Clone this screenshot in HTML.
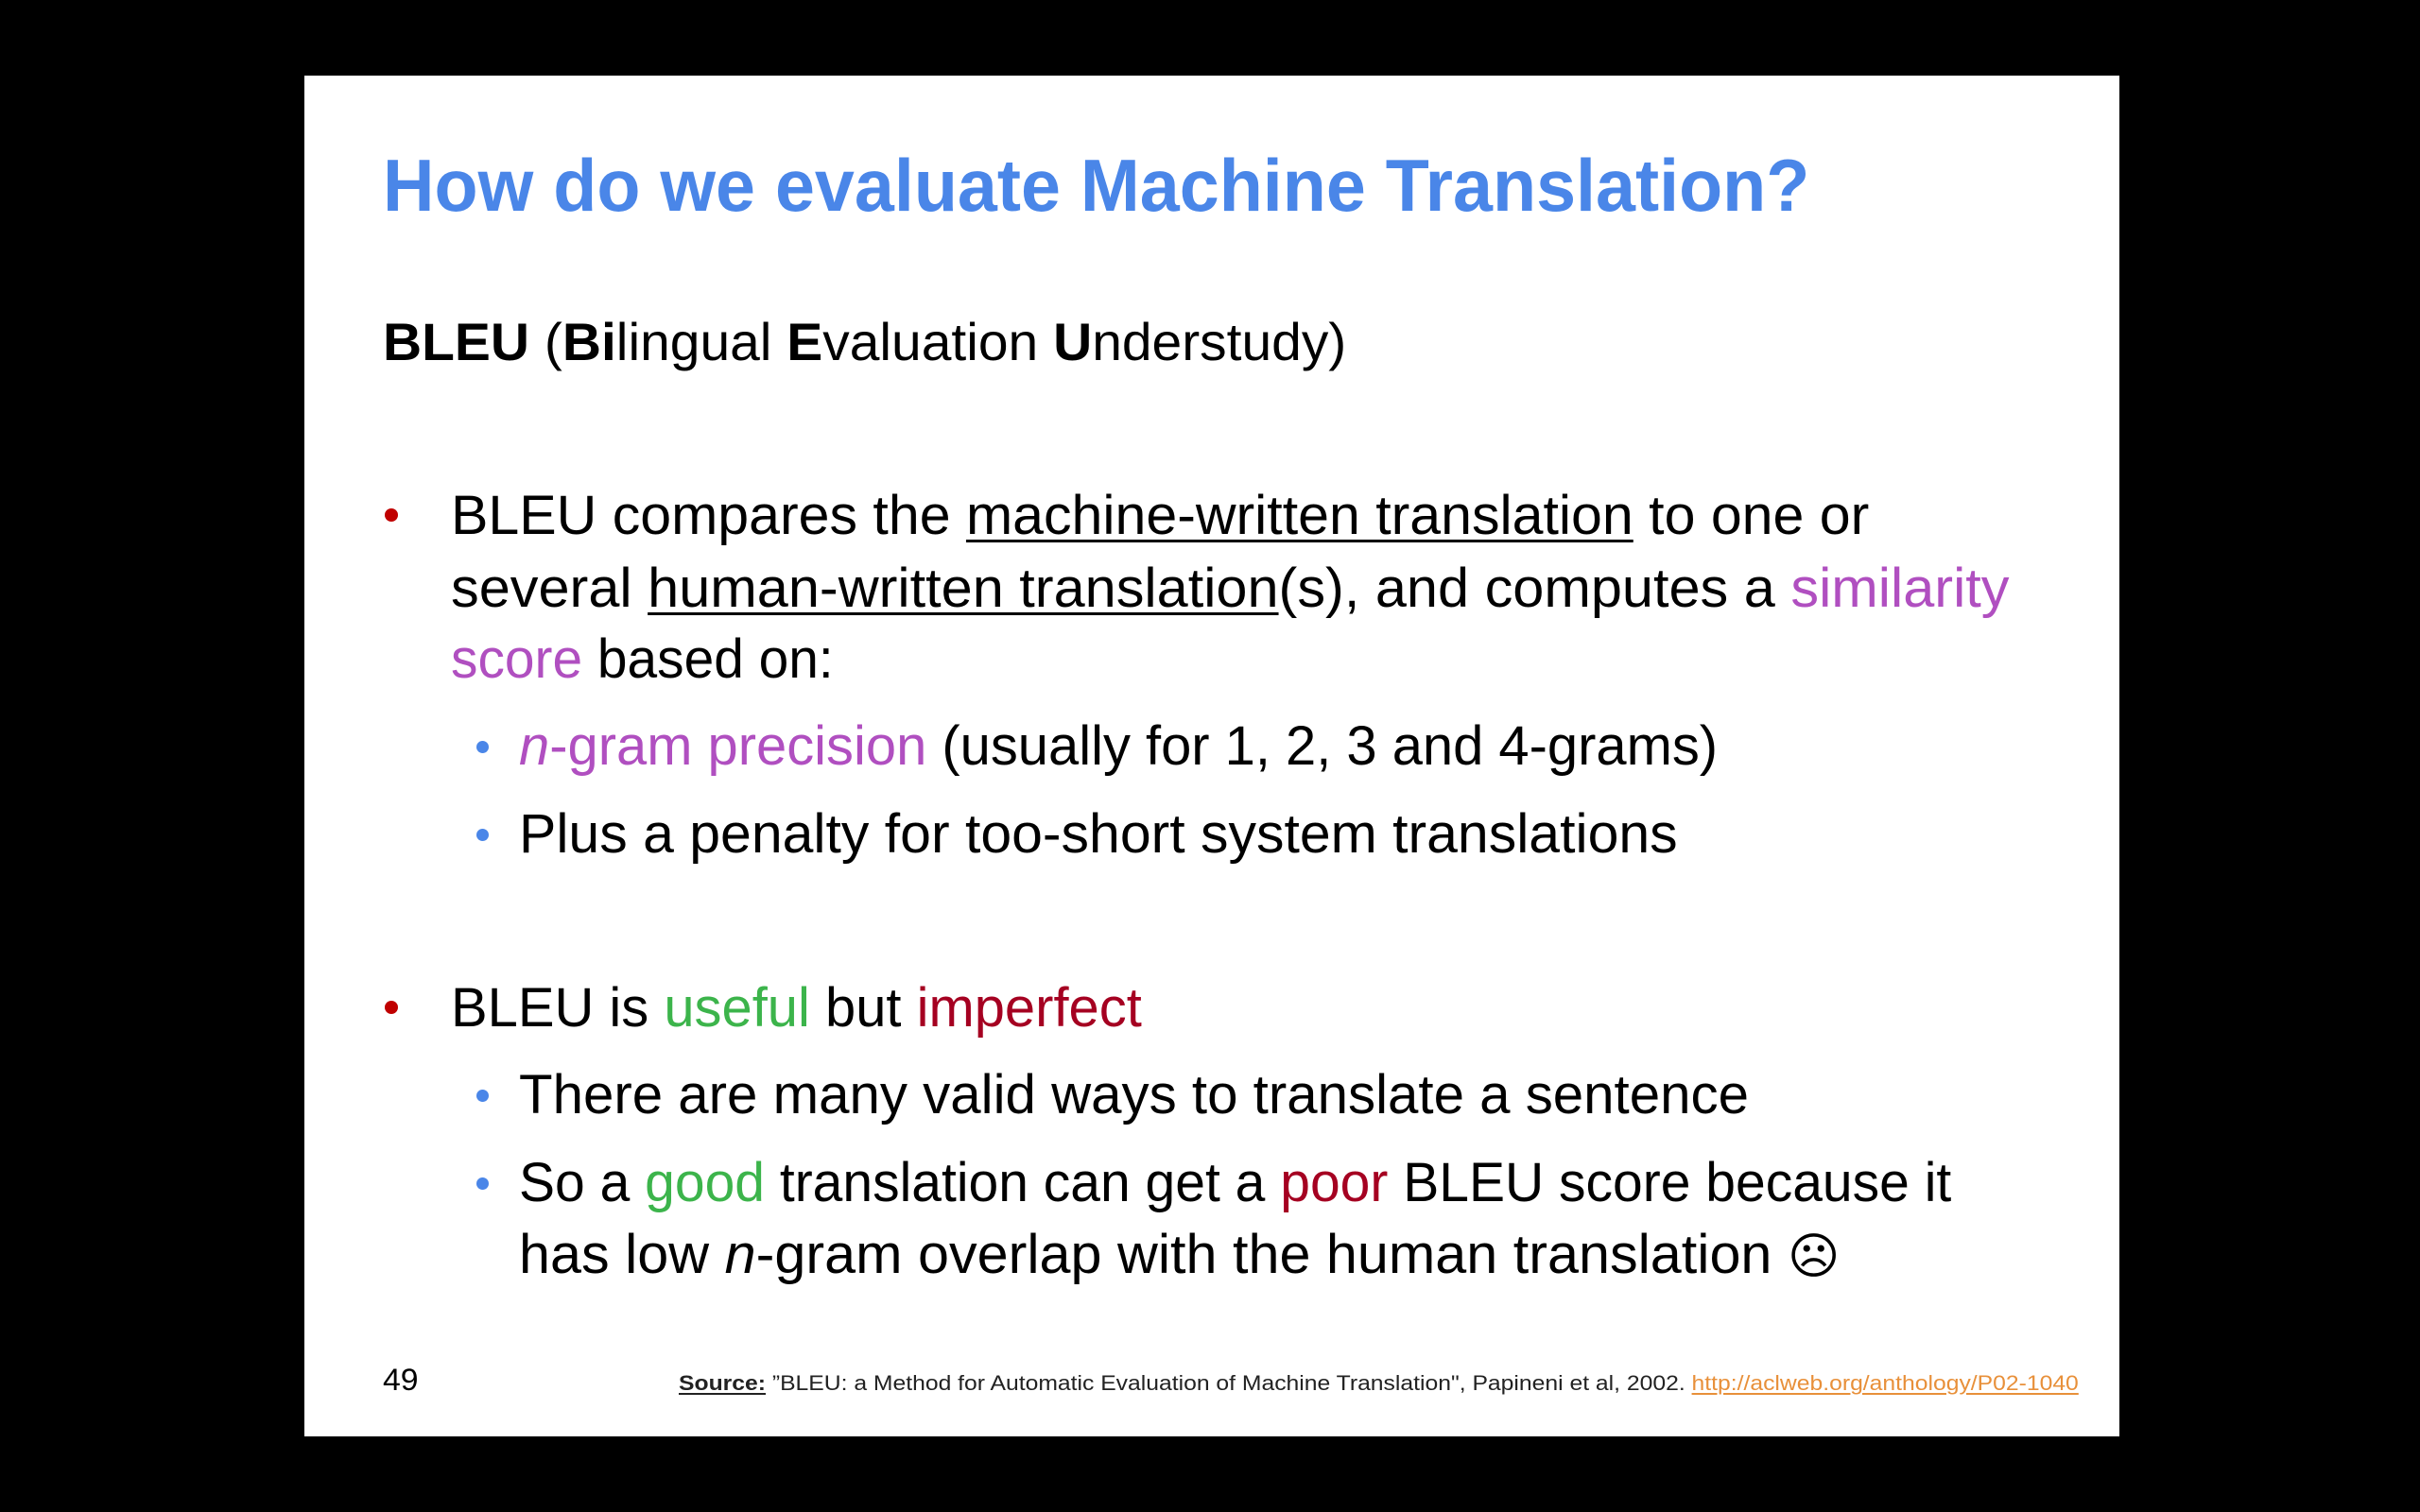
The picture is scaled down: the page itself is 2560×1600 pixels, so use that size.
<!DOCTYPE html>
<html><head><meta charset="utf-8">
<style>
html,body{margin:0;padding:0;background:#000;width:2560px;height:1600px;overflow:hidden}
#slide{position:absolute;left:322px;top:80px;width:1920px;height:1440px;background:#fff}
.ln{position:absolute;white-space:nowrap;line-height:1;font-family:"Liberation Sans",sans-serif;color:#000;transform-origin:0 0;margin-top:3px}
.t{color:#4a86e8;font-weight:bold;font-size:78px}
.b{font-size:58px}
.pur{color:#b04fc0}.grn{color:#3cb44b}.red{color:#a50021}
.dot{position:absolute;border-radius:50%}
.rd{background:#c00000;width:14px;height:14px}
.bd{background:#4a86e8;width:13px;height:13px}
u{text-decoration-thickness:3px;text-underline-offset:6px}
</style></head><body>
<div id="slide"></div>
<div class="ln t" style="left:405px;top:154px;--w:1509">How do we evaluate Machine Translation?</div>
<div class="ln" style="left:405px;top:331px;font-size:56px;--w:1019"><b>BLEU</b> (<b>Bi</b>lingual <b>E</b>valuation <b>U</b>nderstudy)</div>

<div class="dot rd" style="left:407px;top:538px"></div>
<div class="ln b" style="left:477px;top:514px;--w:1500">BLEU compares the <u>machine-written translation</u> to one or</div>
<div class="ln b" style="left:477px;top:591px;--w:1649">several <u>human-written translation</u>(s), and computes a <span class="pur">similarity</span></div>
<div class="ln b" style="left:477px;top:666px;--w:405"><span class="pur">score</span> based on:</div>

<div class="dot bd" style="left:504px;top:784px"></div>
<div class="ln b" style="left:549px;top:758px;--w:1268"><span class="pur"><i>n</i>-gram precision</span> (usually for 1, 2, 3 and 4-grams)</div>
<div class="dot bd" style="left:504px;top:877px"></div>
<div class="ln b" style="left:549px;top:851px;--w:1226">Plus a penalty for too-short system translations</div>

<div class="dot rd" style="left:407px;top:1059px"></div>
<div class="ln b" style="left:477px;top:1035px;--w:731">BLEU is <span class="grn">useful</span> but <span class="red">imperfect</span></div>
<div class="dot bd" style="left:504px;top:1153px"></div>
<div class="ln b" style="left:549px;top:1127px;--w:1301">There are many valid ways to translate a sentence</div>
<div class="dot bd" style="left:504px;top:1246px"></div>
<div class="ln b" style="left:549px;top:1220px;--w:1515">So a <span class="grn">good</span> translation can get a <span class="red">poor</span> BLEU score because it</div>
<div class="ln b" style="left:549px;top:1296px;--w:1397">has low <i>n</i>-gram overlap with the human translation <span style="font-family:'DejaVu Sans',sans-serif;font-size:52px">☹</span></div>

<div class="ln" style="left:405px;top:1441px;font-size:32px;--w:38">49</div>
<div class="ln" style="left:718px;top:1450px;font-size:22px;color:#222;--w:1481"><b><u style="text-decoration-thickness:2px;text-underline-offset:3px">Source:</u></b> ”BLEU: a Method for Automatic Evaluation of Machine Translation", Papineni et al, 2002. <u style="color:#e8903a;text-decoration-thickness:2px;text-underline-offset:3px">http://aclweb.org/anthology/P02-1040</u></div>
<script>
document.querySelectorAll('.ln').forEach(function(e){
  var w=parseFloat(getComputedStyle(e).getPropertyValue('--w'));
  if(w&&e.offsetWidth){e.style.transform='scaleX('+(w/e.offsetWidth)+')';}
});
</script>
</body></html>
